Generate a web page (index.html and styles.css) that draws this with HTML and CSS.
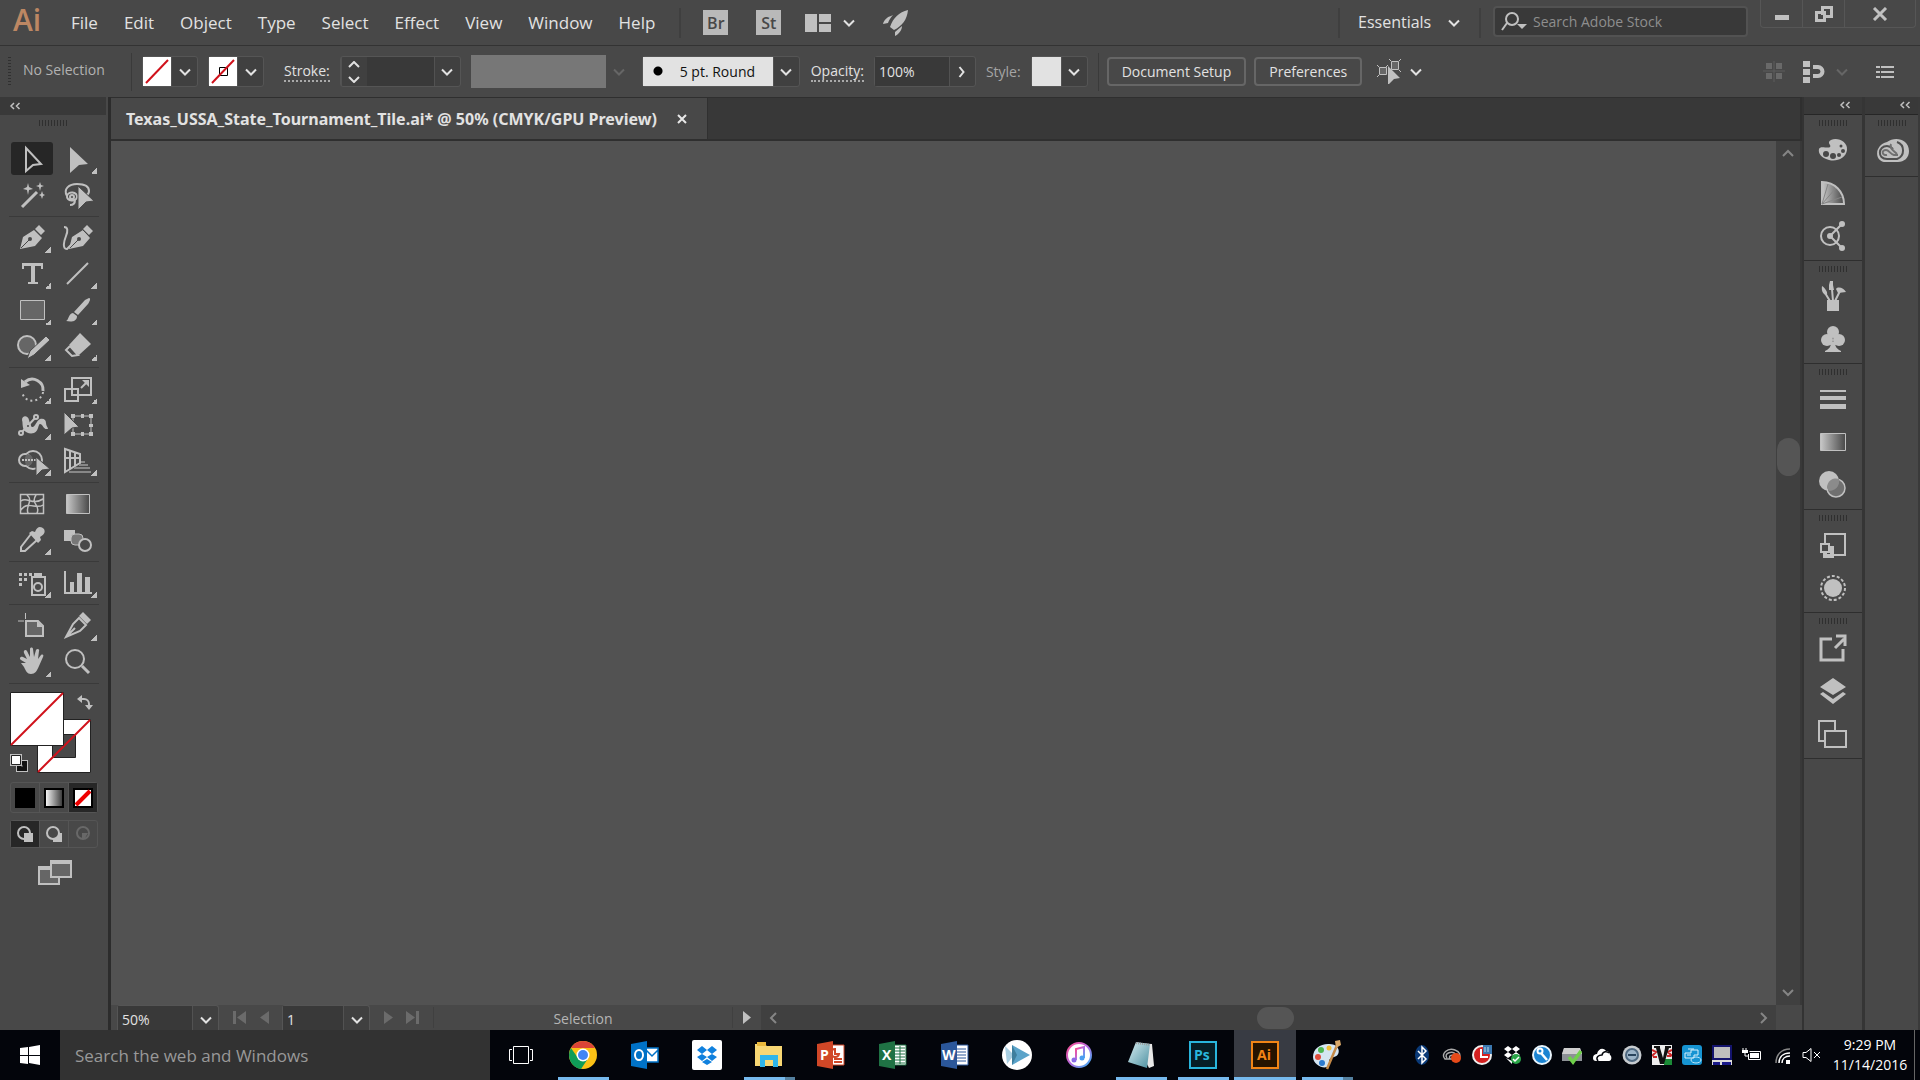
FILE: index.html
```html
<!DOCTYPE html>
<html lang="en">
<head>
  <meta charset="UTF-8" />
  <meta name="viewport" content="width=device-width, initial-scale=1.0"/>
  <title>Texas_USSA_State_Tournament_Tile.ai - Adobe Illustrator</title>
  <link rel="stylesheet" href="styles.css">
</head>
<body>
  <!-- shared shapes -->
  <svg class="defs" aria-hidden="true">
    <symbol id="down" viewBox="0 0 12 8"><path d="M1 1.5l5 5 5-5" stroke="currentColor" stroke-width="2"/></symbol>
    <symbol id="collapse" viewBox="0 0 12 8"><path d="M5 1L2 4l3 3M10.500 1l-3 3 3 3" stroke="currentColor" stroke-width="1.500"/></symbol>
    <linearGradient id="grad"><stop offset="0" stop-color="#c8c8c8"/><stop offset="1" stop-color="#484848"/></linearGradient>
    <linearGradient id="gradbw"><stop offset="0" stop-color="#fff"/><stop offset="1" stop-color="#333"/></linearGradient>
    <linearGradient id="itunes" x2="1" y2="1"><stop offset="0" stop-color="#fb4b8b"/><stop offset=".5" stop-color="#b66be0"/><stop offset="1" stop-color="#35b5f5"/></linearGradient>
    <linearGradient id="glass" x2="1" y2="1"><stop offset="0" stop-color="#d8eef2"/><stop offset="1" stop-color="#4b8fa0"/></linearGradient>
  </svg>

  <div class="app">
    <header class="menubar">
      <span class="logo">Ai</span>
      <nav class="menu">
        <a href="#">File</a>
        <a href="#">Edit</a>
        <a href="#">Object</a>
        <a href="#">Type</a>
        <a href="#">Select</a>
        <a href="#">Effect</a>
        <a href="#">View</a>
        <a href="#">Window</a>
        <a href="#">Help</a>
      </nav>
      <div class="shortcuts">
        <button class="badge">Br</button>
        <button class="badge">St</button>
        <button class="arrange" aria-label="Arrange documents">
          <svg width="26" height="18"><path class="f" d="M0 0h12v18H0zM14 0h12v8H14zM14 10h12v8H14z"/></svg>
          <svg width="12" height="8"><use href="#down"/></svg>
        </button>
        <button aria-label="GPU performance">
          <svg width="26" height="26"><path class="f" d="M25 0C16 2 10 8 7 17l4 3C19 16 24 10 25 0zM8 6C4 7 1 10 0 14l5-1c1-3 3-6 5-8zM12 22l7-6c0 4-3 8-7 10z"/></svg>
        </button>
      </div>
      <div class="workspace">
        <select aria-label="Workspace"><option>Essentials</option></select>
        <svg width="12" height="8"><use href="#down"/></svg>
      </div>
      <label class="stock">
        <svg width="26" height="22"><circle class="s2" cx="11" cy="8" r="6"/><path class="s2" d="M6 12l-5 7"/><path class="f" d="M16 13h10l-5 5z"/></svg>
        <input type="text" placeholder="Search Adobe Stock" aria-label="Search Adobe Stock">
      </label>
      <div class="winbuttons">
        <button aria-label="Minimize"><svg width="16" height="16"><path class="f" d="M1 9h14v5H1z"/></svg></button>
        <button aria-label="Restore"><svg width="18" height="16"><path class="s3" d="M7.500 9V1.500h9v9H10M1.500 6.500h8v8h-8z"/></svg></button>
        <button class="close" aria-label="Close"><svg width="16" height="14"><path class="s3" d="M2 1l12 12M14 1L2 13"/></svg></button>
      </div>
    </header>

    <section class="control">
      <span class="vgrip"></span>
      <span class="state">No Selection</span>
      <div class="combo">
        <button class="sw" aria-label="Fill"><svg width="28" height="29"><path d="M0 0h28v29H0z" fill="#fff"/><path class="red" d="M3 26L25 3"/></svg></button>
        <button class="drop" aria-label="Fill options"><svg width="12" height="8"><use href="#down"/></svg></button>
      </div>
      <div class="combo">
        <button class="sw" aria-label="Stroke color"><svg width="28" height="29"><path d="M0 0h28v29H0z" fill="#fff"/><path d="M10.500 10.500h8v8h-8z" stroke="#000"/><path class="red" d="M3 26L25 3"/></svg></button>
        <button class="drop" aria-label="Stroke options"><svg width="12" height="8"><use href="#down"/></svg></button>
      </div>
      <label class="under strokelabel" for="weight">Stroke:</label>
      <div class="combo weight">
        <button class="spin" aria-label="Step weight"><svg width="12" height="22"><path d="M1 6l5-5 5 5M1 16l5 5 5-5" stroke="currentColor" stroke-width="2"/></svg></button>
        <input type="text" id="weight">
        <button class="drop" aria-label="Weights"><svg width="12" height="8"><use href="#down"/></svg></button>
      </div>
      <div class="profile">
        <span></span>
        <button class="drop" disabled aria-label="Width profile"><svg width="12" height="8"><use href="#down"/></svg></button>
      </div>
      <div class="combo brush">
        <select aria-label="Brush definition"><option>5 pt. Round</option></select>
        <span class="drop"><svg width="12" height="8"><use href="#down"/></svg></span>
      </div>
      <label class="under" for="opacity">Opacity:</label>
      <div class="combo opacity">
        <input type="text" id="opacity" value="100%">
        <button class="drop" aria-label="Opacity slider"><svg width="8" height="12"><path d="M1.500 1l4 5-4 5" stroke="currentColor" stroke-width="2"/></svg></button>
      </div>
      <span class="dim">Style:</span>
      <div class="combo">
        <button class="sw" aria-label="Style"><svg width="29" height="29"><path d="M0 0h29v29H0z" fill="#e2e2e2"/></svg></button>
        <button class="drop" aria-label="Graphic styles"><svg width="12" height="8"><use href="#down"/></svg></button>
      </div>
      <div class="actions">
        <button class="push">Document Setup</button>
        <button class="push">Preferences</button>
        <button class="similar" aria-label="Select similar">
          <svg width="25" height="25"><path d="M2.500 8.500h7v7h-7zM14.500 2.500h7v8h-7z" fill="#666" stroke="#c0c0c0"/><path class="s" d="M0 6l2 2M11 6L9 8M0 18l2-2M12 0l2 2M24 0l-2 2M24 13l-2-2"/><path class="f" d="M11 7l12 12-6 1-6 6z"/></svg>
          <svg width="12" height="8"><use href="#down"/></svg>
        </button>
      </div>
      <div class="aligners">
        <button disabled aria-label="Align"><svg width="22" height="21"><path d="M3 2h6v6H3zM13 2h6v6h-6zM3 12h6v6H3zM13 12h6v6h-6z" fill="#696969"/><path d="M11 0v21M0 10h22" stroke="#5c5c5c"/></svg></button>
        <button class="snap" aria-label="Snap">
          <svg width="22" height="22"><path class="f" d="M0 0h7v6H0zM0 8h7v6H0zM0 16h7v6H0zM10 4h3v4h-3zM10 13h3v4h-3z"/><path d="M13 6h2a4 4 0 010 9h-2" stroke="#c0c0c0" stroke-width="4"/></svg>
          <svg class="off" width="12" height="8"><use href="#down"/></svg>
        </button>
        <button aria-label="Panel menu"><svg width="18" height="14"><path class="s2" d="M0 2h4M5 2h13M0 7h4M5 7h13M0 12h4M5 12h13"/></svg></button>
      </div>
    </section>

    <main class="work">
      <aside class="tools">
        <div class="collapse"><svg width="12" height="8"><use href="#collapse"/></svg></div>
        <div class="hgrip"></div>
        <div class="toolset">
          <button class="tool on" aria-label="Selection"><svg viewBox="-23 -18 46 36"><path class="s2" d="M-6-11L9 5 1 6l-7 6z"/></svg></button>
          <button class="tool more" aria-label="Direct Selection"><svg viewBox="-23 -18 46 36"><path class="f" d="M-8-12L10 5 1 6l-9 8z"/></svg></button>
          <button class="tool" aria-label="Magic Wand"><svg viewBox="-23 -18 46 36"><path class="s3" d="M-10 12L5-3"/><path class="f" d="M-4-12l1 4 4 2-4 1-1 5-1-5-4-1 4-2zM8-13l1 3 3 1-3 1-1 4-1-4-3-1 3-1zM10-4l1 3 2 1-2 1-1 3-1-3-2-1 2-1z"/></svg></button>
          <button class="tool" aria-label="Lasso"><svg viewBox="-23 -18 46 36"><path class="s2" d="M-11 1c-4-7 2-12 10-12S11-8 11-4 9 0 7 1M-11 1a5 4 0 1010 1 5 4 0 00-10-1M-8 2a2 2 0 104 0 2 2 0 00-4 0M-3 5c0 3-2 5-5 5"/><path class="f cut" d="M0-9l16 15-8 1-8 8z"/></svg></button>
        </div>
        <div class="toolset">
          <button class="tool more" aria-label="Pen"><svg viewBox="-23 -18 46 36"><path class="f" d="M-12 11l3-12L2-8l8 8-7 8zM3-9l4-4 6 6-4 4z"/><path class="k" d="M-11 10l8-8M2-9l9 9"/><circle cx="-2" cy="1" r="2" fill="#484848"/></svg></button>
          <button class="tool" aria-label="Curvature"><svg viewBox="-23 -18 46 36"><path class="f" d="M-9 11l3-12L5-8l7 8-7 8zM5-9l4-4 6 6-4 4z"/><path class="k" d="M-8 10l8-8M4-9l9 9"/><circle cx="1" cy="1" r="2" fill="#484848"/><path class="s2" d="M-14-11c4 0 4 4 2 9s-4 13 1 13l5-5"/></svg></button>
          <button class="tool more" aria-label="Type"><svg viewBox="-23 -18 46 36"><path class="f" d="M-10-11h21v6H9v-3H3V8h3v2H-4V8h3V-8h-7v3h-2z"/></svg></button>
          <button class="tool more" aria-label="Line Segment"><svg viewBox="-23 -18 46 36"><path class="s2" d="M-11 10L10-11"/></svg></button>
          <button class="tool more" aria-label="Rectangle"><svg viewBox="-23 -18 46 36"><path d="M-11.500-9.500h24v19h-24z" fill="#666" stroke="#c0c0c0"/></svg></button>
          <button class="tool more" aria-label="Paintbrush"><svg viewBox="-23 -18 46 36"><path class="f" d="M11-12c2 0 1 3-1 6L0 5l-4-3L7-10zM-5 3l4 3c0 6-6 6-11 5 3-1 2-7 7-8z"/></svg></button>
          <button class="tool more" aria-label="Shaper"><svg viewBox="-23 -18 46 36"><circle cx="-5" cy="-1" r="9" fill="#666" stroke="#c0c0c0" stroke-width="2"/><path class="f cut" d="M14-10l4 4L2 9l-7 4 3-8z"/></svg></button>
          <button class="tool more" aria-label="Eraser"><svg viewBox="-23 -18 46 36"><path class="f" d="M2-13L13-2 1 9l-10-10z"/><path class="s2" d="M-8 0l-4 4 6 6 6-1-8-9"/></svg></button>
        </div>
        <div class="toolset">
          <button class="tool more" aria-label="Rotate"><svg viewBox="-23 -18 46 36"><path d="M-7-7c8-7 19 0 18 9" stroke="#c0c0c0" stroke-width="3"/><path class="f" d="M-11-10v9l9-3z"/><path d="M11 3c-1 10-18 13-21 0" class="s2" stroke-dasharray="2 3"/></svg></button>
          <button class="tool more" aria-label="Scale"><svg viewBox="-23 -18 46 36"><path class="s2" d="M-6-11h19V6H-6zM-13 0H0v12h-13z"/><path class="s2" d="M3-1l6-6"/><path class="f" d="M4-9h7v7z"/></svg></button>
          <button class="tool more" aria-label="Width"><svg viewBox="-23 -18 46 36"><path class="f" d="M-10-5c0-5 6-5 7 0 1 3 1 6 3 7 3 1 4-6 8-8 4-1 6 1 6 4 0 3 2 4 2 6-5 1-5-5-8-5-2 0-1 7-6 9-4 1-8 0-10-3-2-4-1-7-2-10z"/><path class="s2" d="M-11 8L4-8"/><circle class="s2 hole" cx="-11" cy="8" r="2"/><circle class="s2 hole" cx="4" cy="-8" r="2"/><circle class="s2 hole" cx="-4" cy="1" r="2"/></svg></button>
          <button class="tool" aria-label="Free Transform"><svg viewBox="-23 -18 46 36"><path class="s" d="M-5-9h18V9H-5z"/><path class="f" d="M-7-11h4v4h-4zM3-11h3v4H3zM11-11h4v4h-4zM11-1h4v3h-4zM11 7h4v4h-4zM3 7h3v4H3zM-7 7h4v4h-4z"/><path class="f cut" d="M-14-13L1 2l-7 1-8 7z"/></svg></button>
          <button class="tool more" aria-label="Shape Builder"><svg viewBox="-23 -18 46 36"><circle class="s2" cx="1" cy="-1" r="9"/><circle class="s2 hole" cx="-7" cy="-1" r="6"/><path d="M-5-7a9 9 0 000 12 6 6 0 000-12z" fill="#666"/><path class="s2" d="M-10-1H8" stroke-dasharray="2 1"/><path class="f cut" d="M4-4l14 12-8 1-6 6z"/></svg></button>
          <button class="tool more" aria-label="Perspective Grid"><svg viewBox="-23 -18 46 36"><path class="s2" d="M-13-12v23L2 2V-7zM-8-10V8M-3-8V5M-13-3H2"/><path d="M3 1h4M1 4h9M-4 7h16M-9 11h22" stroke="#888" stroke-width="2"/></svg></button>
        </div>
        <div class="toolset">
          <button class="tool" aria-label="Mesh"><svg viewBox="-23 -18 46 36"><path class="s" stroke-width="1.500" d="M-11.500-9.500h23v19h-23zM-11-3C-5-8 0 2 11-5M-11 6C-4-4 4 6 11 1M-5-9c7 6-2 11 1 18M4-9C-2 0 9 1 5 9"/></svg></button>
          <button class="tool" aria-label="Gradient"><svg viewBox="-23 -18 46 36"><path d="M-11.500-9.500h23v19h-23z" fill="url(#grad)" stroke="#c0c0c0"/></svg></button>
          <button class="tool more" aria-label="Eyedropper"><svg viewBox="-23 -18 46 36"><path class="s2" d="M-1-6L-11 7v4h4L5 0"/><path class="f" d="M-3-7l3-2 3 1C5-14 9-14 12-11c2 4-1 6-4 8l1 3-3 3z"/></svg></button>
          <button class="tool" aria-label="Blend"><svg viewBox="-23 -18 46 36"><path class="f" d="M-14-10h11v11h-11z"/><rect x="-7" y="-6" width="12" height="11" rx="4" fill="#777" stroke="#c0c0c0"/><circle class="s2 hole" cx="7" cy="5" r="6"/></svg></button>
        </div>
        <div class="toolset">
          <button class="tool more" aria-label="Symbol Sprayer"><svg viewBox="-23 -18 46 36"><path class="f" d="M-13-10h3v3h-3zM-8-10h3v3h-3zM-3-10h3v3h-3zM-13-5h3v3h-3zM-8-5h3v3h-3zM-13 0h3v3h-3zM2-10h8v5H2z"/><path class="s2" d="M0-6h13v18H0z"/><circle class="s2" cx="6" cy="4" r="4"/></svg></button>
          <button class="tool more" aria-label="Column Graph"><svg viewBox="-23 -18 46 36"><path class="f" d="M-14-12h2v21h26v2h-28zM-8-1h4v10h-4zM-1-10h5V9h-5zM7-6h5V9H7z"/></svg></button>
        </div>
        <div class="toolset">
          <button class="tool" aria-label="Artboard"><svg viewBox="-23 -18 46 36"><path d="M-6-5H6l5 5v10H-6z" fill="#666" stroke="#c0c0c0" stroke-width="2"/><path class="f" d="M5-5l6 6H5z"/><path class="s" d="M-14-5h6M-6.500-13v6"/></svg></button>
          <button class="tool more" aria-label="Slice"><svg viewBox="-23 -18 46 36"><path class="s2" d="M-12 11L-5-2l6-6 7 7-6 6zM-12 11l9-9"/><path class="f" d="M5-14l8 8-4 4-8-8z"/></svg></button>
          <button class="tool more" aria-label="Hand"><svg viewBox="-23 -18 46 36"><path class="f" d="M-6 1L-11-2c-2-1-1-4 2-3l4 2-3-6c-1-3 2-4 3-2l3 6 0-8c0-2 3-2 3 0l1 8 2-7c1-2 4-1 3 1L6-3l3-4c2-1 3 0 2 2L7 4C5 9 3 12-1 12S-6 9-8 5l-3-4z"/></svg></button>
          <button class="tool" aria-label="Zoom"><svg viewBox="-23 -18 46 36"><circle class="s2" cx="-3" cy="-3" r="9"/><path class="s3" d="M4 4l7 7"/></svg></button>
        </div>
        <div class="paint">
          <button class="strokebox" aria-label="Stroke"><svg width="54" height="54"><path d="M.5.5h53v53H.5z" fill="#fff" stroke="#222"/><path d="M15.500 15.500h23v23h-23z" fill="#484848" stroke="#222"/><path class="red" d="M1 53L53 1"/></svg></button>
          <button class="fillbox" aria-label="Fill"><svg width="54" height="54"><path d="M.5.5h53v53H.5z" fill="#fff" stroke="#222"/><path class="red" d="M1 53L53 1"/></svg></button>
          <button class="swap" aria-label="Swap fill and stroke"><svg width="16" height="16"><path class="s2" d="M4 4h3a5 5 0 015 5v2"/><path class="f" d="M0 4l5-4v8zM8 10h8l-4 5z"/></svg></button>
          <button class="initial" aria-label="Default fill and stroke"><svg width="18" height="18"><path d="M6 6h12v12H6z" fill="#c0c0c0"/><path d="M9 9h6v6H9z" fill="#484848" stroke="#111" stroke-width="4"/><path d="M0 0h12v12H0z" fill="#c0c0c0"/><path d="M1.500 1.500h9v9h-9z" fill="#fff" stroke="#222"/></svg></button>
        </div>
        <div class="modes colors">
          <button aria-label="Color"><svg width="20" height="20"><path d="M0 0h20v20H0z" fill="#000"/></svg></button>
          <button aria-label="Gradient"><svg width="20" height="20"><path d="M1 1h18v18H1z" fill="url(#gradbw)" stroke="#000" stroke-width="2"/></svg></button>
          <button class="on" aria-label="None"><svg width="20" height="20"><path d="M1 1h18v18H1z" fill="#fff" stroke="#000" stroke-width="2"/><path d="M3 17L17 3" stroke="#e00" stroke-width="4"/></svg></button>
        </div>
        <div class="modes">
          <button class="on" aria-label="Draw Normal"><svg width="18" height="18"><circle class="s2" cx="8" cy="8" r="6"/><path class="f" d="M8 8h9v9H8z"/></svg></button>
          <button aria-label="Draw Behind"><svg width="18" height="18"><path class="f" d="M8 8h9v9H8z"/><circle class="s2 hole" cx="8" cy="8" r="6"/></svg></button>
          <button disabled aria-label="Draw Inside"><svg width="18" height="18"><circle cx="9" cy="8" r="6" stroke="#686868" stroke-width="2"/><path d="M8 8h6l-3 5H8z" fill="#686868"/></svg></button>
        </div>
        <button class="screen" aria-label="Change screen mode"><svg width="34" height="26"><path d="M1 8h20v16H1z" fill="#666" stroke="#c0c0c0" stroke-width="2"/><path d="M13 2h20v15H13z" fill="#666" stroke="#c0c0c0" stroke-width="2"/><path class="f" d="M0 6h13v4H0zM12 0h22v4H12z"/></svg></button>
      </aside>

      <section class="document">
        <div class="tabs">
          <div class="tab">
            <span>Texas_USSA_State_Tournament_Tile.ai* @ 50% (CMYK/GPU Preview)</span>
            <button aria-label="Close tab"><svg width="10" height="10"><path d="M1 1l8 8M9 1L1 9" stroke="#e8e8e8" stroke-width="2"/></svg></button>
          </div>
        </div>
        <div class="view">
          <div class="canvas"></div>
          <div class="vscroll">
            <svg width="12" height="8"><path d="M1 7l5-5 5 5" stroke="#858585" stroke-width="2"/></svg>
            <span class="thumb"></span>
            <svg width="12" height="8"><path d="M1 1l5 5 5-5" stroke="#858585" stroke-width="2"/></svg>
          </div>
        </div>
        <footer class="status">
          <div class="combo zoom">
            <input type="text" value="50%" aria-label="Zoom">
            <button class="drop" aria-label="Zoom levels"><svg width="12" height="8"><use href="#down"/></svg></button>
          </div>
          <div class="step">
            <button aria-label="First artboard"><svg width="14" height="13"><path d="M0 0h3v13H0zM13 0v13L4 6.500z" fill="#6b6b6b"/></svg></button>
            <button aria-label="Previous artboard"><svg width="9" height="13"><path d="M9 0v13L0 6.500z" fill="#6b6b6b"/></svg></button>
          </div>
          <div class="combo board">
            <input type="text" value="1" aria-label="Artboard">
            <button class="drop" aria-label="Artboards"><svg width="12" height="8"><use href="#down"/></svg></button>
          </div>
          <div class="step">
            <button aria-label="Next artboard"><svg width="9" height="13"><path d="M0 0v13l9-6.500z" fill="#6b6b6b"/></svg></button>
            <button aria-label="Last artboard"><svg width="14" height="13"><path d="M10 0h3v13h-3zM0 0v13l9-6.500z" fill="#6b6b6b"/></svg></button>
          </div>
          <span class="current">Selection</span>
          <button class="play" aria-label="Status menu"><svg width="8" height="13"><path class="f" d="M0 0v13l8-6.500z"/></svg></button>
          <div class="hscroll">
            <svg width="8" height="12"><path d="M7 1L2 6l5 5" stroke="#858585" stroke-width="2"/></svg>
            <span class="thumb"></span>
            <svg width="8" height="12"><path d="M1 1l5 5-5 5" stroke="#858585" stroke-width="2"/></svg>
          </div>
          <span class="corner"></span>
        </footer>
      </section>

      <aside class="dock main">
        <div class="collapse"><svg width="12" height="8"><use href="#collapse"/></svg></div>
        <div class="group">
          <button aria-label="Color"><svg width="30" height="30"><path class="f" d="M13 5C20 2 30 7 29 15S19 27 11 25 0 18 1 14s9 0 11-2-4-4 1-7z"/><g fill="#484848"><circle cx="8" cy="19" r="3"/><circle cx="15" cy="21" r="3"/><circle cx="21" cy="20" r="2"/><circle cx="25" cy="16" r="2"/><circle cx="23" cy="11" r="1.500"/></g></svg></button>
          <button aria-label="Color Guide"><svg width="30" height="30"><path d="M4 4c13 0 22 10 22 22H4z" fill="url(#grad)" stroke="#c0c0c0" stroke-width="2"/><path d="M4 26l6-20M4 26L18 10M4 26l20-7" stroke="#858585"/></svg></button>
          <button aria-label="Color Themes"><svg width="30" height="30"><circle class="s2" cx="12" cy="15" r="9"/><path class="s2" d="M24 3L12 15l12 12"/><circle class="f" cx="12" cy="15" r="3"/><circle class="f" cx="24" cy="3" r="3"/><circle class="f" cx="24" cy="27" r="3"/></svg></button>
        </div>
        <div class="group">
          <button aria-label="Brushes"><svg width="30" height="30"><path class="f" d="M9 19h12v11H9zM4 5c3 2 6 6 5 9-3 0-6-3-5-9zM11 4l1-4h3v4l1 5h-5zM18 8c2-3 8-1 10 3l-8 1z"/><path class="s2" d="M7 12l5 8M14 8l1 12M22 10l-5 10"/></svg></button>
          <button aria-label="Symbols"><svg width="30" height="30"><path class="f" d="M13 18h4c0 5 2 7 6 9v1H7v-1c4-2 6-4 6-9z"/><circle class="f" cx="15" cy="8" r="6"/><circle class="f" cx="9" cy="16" r="6"/><circle class="f" cx="21" cy="16" r="6"/></svg></button>
        </div>
        <div class="group">
          <button aria-label="Stroke"><svg width="30" height="30"><path class="f" d="M2 6h26v2H2zM2 12h26v4H2zM2 20h26v5H2z"/></svg></button>
          <button aria-label="Gradient"><svg width="30" height="30"><path d="M2.500 6.500h25v17h-25z" fill="url(#grad)" stroke="#c0c0c0"/></svg></button>
          <button aria-label="Transparency"><svg width="30" height="30"><circle class="f" cx="11" cy="11" r="10"/><circle cx="18" cy="18" r="9" fill="#707070" stroke="#c0c0c0" stroke-width="1.500"/><path d="M9 18a9 9 0 0112-9 10 10 0 01-10 12z" fill="#8b8b8b"/></svg></button>
        </div>
        <div class="group">
          <button aria-label="Appearance"><svg width="30" height="30"><path class="s2" d="M7 14V4h20v21H16"/><path d="M7 18h7v8H7z" stroke="#c0c0c0" stroke-width="4"/><path class="s2 hole" d="M3 14h8v8H3z"/></svg></button>
          <button aria-label="Graphic Styles"><svg width="30" height="30"><circle class="f" cx="15" cy="15" r="9"/><circle class="s2" cx="15" cy="15" r="12" stroke-dasharray="3 2"/></svg></button>
        </div>
        <div class="group">
          <button aria-label="Asset Export"><svg width="30" height="30"><path class="s3" d="M14 6H3v21h22V16M17 15l9-9M18 3h9v10"/></svg></button>
          <button aria-label="Layers"><svg width="30" height="30"><path class="f" d="M15 2l13 9-13 8L2 11zM2 18l3-2 10 7 10-7 3 2-13 10z"/></svg></button>
          <button aria-label="Artboards"><svg width="30" height="30"><path class="s2" d="M7 22H1V2h16v10M7 12h21v16H7z"/></svg></button>
        </div>
      </aside>
      <aside class="dock side">
        <div class="collapse"><svg width="12" height="8"><use href="#collapse"/></svg></div>
        <div class="group">
          <button aria-label="Libraries"><svg width="34" height="26"><path class="f" d="M11 4C19-2 33 1 33 13c0 7-5 11-11 11H10C-2 24-2 7 11 4z"/><path d="M21 4a9 9 0 010 17H11C1 21 2 8 11 8c3 0 5 2 6 3" stroke="#505050" stroke-width="2"/><path d="M22 17h-4c-4-1-5-5-8-5-5 0-4 6 1 5M15 6c-2 4 3 7 6 10" stroke="#707070" stroke-width="2"/></svg></button>
        </div>
      </aside>
    </main>
  </div>

  <footer class="taskbar">
    <button class="start" aria-label="Start"><svg width="20" height="20"><path d="M0 3l8-1v8H0zM9 2l11-2v10H9zM0 11h8v8l-8-1zM9 11h11v9L9 18z" fill="#fff"/></svg></button>
    <input class="find" type="text" placeholder="Search the web and Windows" aria-label="Search the web and Windows">
    <nav class="pinned">
      <button aria-label="Task View"><svg width="24" height="20"><path d="M4.500 1.500h15v17h-15zM3 4.500H.5v11H3M21 4.500h2.500v11H21" stroke="#fff"/></svg></button>
      <button class="run" aria-label="Chrome"><svg width="28" height="28"><circle cx="14" cy="14" r="14" fill="#fbc116"/><path d="M2 7a14 14 0 0112-7 14 14 0 0112 7H14z" fill="#db4437"/><path d="M2 7a14 14 0 0010 21l6-9-9-2z" fill="#0f9d58"/><circle cx="14" cy="14" r="6.500" fill="#fff"/><circle cx="14" cy="14" r="5" fill="#4285f4"/></svg></button>
      <button aria-label="Outlook"><svg width="28" height="28"><path d="M14 7h13v14H14z" fill="#fff"/><path d="M15 9l6 6 6-6M14 7h13v14H14" stroke="#0072c6" stroke-width="1.500"/><path d="M0 3l16-3v28L0 25z" fill="#0072c6"/><ellipse cx="8" cy="14" rx="4" ry="5" stroke="#fff" stroke-width="2"/></svg></button>
      <button aria-label="Dropbox"><svg width="30" height="30"><rect width="30" height="30" rx="2" fill="#fff"/><path d="M10 6l5 4-5 4-5-4zM20 6l5 4-5 4-5-4zM10 14l5 3-5 4-5-4zM20 14l5 3-5 4-5-4zM15 19l5 3-5 3-5-3z" fill="#1081de"/></svg></button>
      <button class="run many" aria-label="File Explorer"><svg width="28" height="26"><path d="M0 2h9l3 2h15v20H0z" fill="#f7d774"/><path d="M2 0h9v4H2z" fill="#e9b83c"/><path d="M5 25V13h18v12h-5v-7h-8v7z" fill="#2fb5ea"/></svg></button>
      <button aria-label="PowerPoint"><svg width="28" height="28"><path d="M14 4h13v20H14z" fill="#fff" stroke="#d04727"/><path d="M17 18h8M17 21h8M18 8a4 4 0 104 5h-4z" stroke="#d04727" stroke-width="2"/><path d="M0 3l16-3v28L0 25z" fill="#d04727"/><text x="3" y="19" class="glyph">P</text></svg></button>
      <button aria-label="Excel"><svg width="28" height="28"><path d="M14 4h13v20H14z" fill="#fff" stroke="#1f7244"/><path d="M16 7h10M16 10h10M16 13h10M16 16h10M16 19h10M16 22h10M21 5v18" stroke="#1f7244"/><path d="M0 3l16-3v28L0 25z" fill="#1f7244"/><text x="3" y="19" class="glyph">X</text></svg></button>
      <button aria-label="Word"><svg width="28" height="28"><path d="M14 4h13v20H14z" fill="#fff" stroke="#2b579a"/><path d="M15 8h10M15 11h10M15 14h10M15 17h10M15 20h10" stroke="#2b579a"/><path d="M0 3l16-3v28L0 25z" fill="#2b579a"/><text x="1" y="19" class="glyph">W</text></svg></button>
      <button aria-label="Player"><svg width="30" height="30"><circle cx="15" cy="15" r="15" fill="#fff"/><path d="M10 5l18 10-18 10z" fill="#5ba3c9"/><path d="M3 6l9 9-7 9z" fill="#a9cfe2"/><path d="M10 5l5 10-5 10z" fill="#3e7f9e"/></svg></button>
      <button aria-label="iTunes"><svg width="28" height="28"><circle cx="14" cy="14" r="12" fill="#fff" stroke="url(#itunes)" stroke-width="2"/><path d="M11 19V8l8-2v11" stroke="url(#itunes)" stroke-width="2"/><circle cx="9" cy="19" r="2.500" fill="#8a6be8"/><circle cx="17" cy="17" r="2.500" fill="#4b9df0"/></svg></button>
      <button class="run" aria-label="Notepad"><svg width="28" height="28"><path d="M9 2l16 1 2 22-5 2z" fill="#e8e8e8"/><path d="M9 1l14 2-3 24L1 21z" fill="url(#glass)"/><path d="M9 2l14 2" stroke="#999" stroke-width="2" stroke-dasharray="1 1"/></svg></button>
      <button class="run" aria-label="Photoshop"><svg width="28" height="28"><path d="M1 1h26v26H1z" fill="#061e26" stroke="#29b5dc" stroke-width="2"/><text x="5" y="19" class="glyph ps">Ps</text></svg></button>
      <button class="run active" aria-label="Illustrator"><svg width="28" height="28"><path d="M1 1h26v26H1z" fill="#261300" stroke="#f28416" stroke-width="2"/><text x="6" y="19" class="glyph ai">Ai</text></svg></button>
      <button class="run many" aria-label="Paint"><svg width="30" height="30"><path d="M16 4C28 3 30 15 22 17s-3 5-6 9S1 25 1 17 8 4 16 4z" fill="#d5e6f3"/><circle cx="9" cy="10" r="3" fill="#4eb653"/><circle cx="17" cy="8" r="2.500" fill="#f0bd35"/><circle cx="6" cy="17" r="3" fill="#df4b3a"/><circle cx="10" cy="23" r="3" fill="#2c7bd0"/><path d="M26 3L15 29" stroke="#c58a48" stroke-width="2.500"/><path d="M23 1l5-1 1 5-5 3z" fill="#d9a868"/></svg></button>
    </nav>
    <div class="tray">
      <svg width="20" height="20"><ellipse cx="10" cy="10" rx="7" ry="10" fill="#0a3a78"/><path d="M6 6l8 8-4 4V2l4 4-8 8" stroke="#fff" stroke-width="1.500"/></svg>
      <svg width="20" height="20"><path d="M3 14c-5-5 3-12 10-9 5 2 6 5 4 9zM5 13c-4-5 6-8 9-3M8 14c-2-4 3-5 5-2" stroke="#aaa" stroke-width="1.500"/><circle cx="14" cy="13" r="5" fill="#e64a19"/></svg>
      <svg width="20" height="20"><circle cx="10" cy="10" r="9" fill="#d32020" stroke="#eee" stroke-width="2"/><path d="M9 4v8h7" stroke="#fff" stroke-width="2"/><path d="M11 0h9v9h-9z" fill="#3b78b0"/><path d="M13 2v5M16 2v5" stroke="#bde"/></svg>
      <svg width="20" height="20"><path d="M6 1l4 3-4 3-4-3zM14 1l4 3-4 3-4-3zM6 7l4 3-4 3-4-3zM14 7l4 3-4 3-4-3zM4 13l6 3v3z" fill="#fff"/><circle cx="14" cy="14" r="5" fill="#2aa548"/><path d="M11 14l2 2 4-4" stroke="#fff" stroke-width="1.500"/></svg>
      <svg width="20" height="20"><circle cx="10" cy="10" r="9" fill="#1b84d2" stroke="#e9f4fb" stroke-width="2"/><path d="M9 8l6 7" stroke="#fff" stroke-width="2.500"/><circle cx="8" cy="6" r="2.500" stroke="#fff" stroke-width="2"/></svg>
      <svg width="20" height="20"><path d="M2 3h16l2 6v7H0V9z" fill="#8d9196"/><path d="M2 3h16l2 6H0z" fill="#cfcfcf"/><path d="M7 12l4 5 8-11" stroke="#6fd04b" stroke-width="3.500"/></svg>
      <svg width="20" height="20"><path d="M1 13c0-3 2-4 4-4 1-5 6-7 9-3 3 0 4 3 4 4 2 1 2 6-1 6H4c-2 0-3-1-3-3z" fill="#fff"/><path d="M6 16c-3-4 1-6 4-6 1-4 5-4 7-2" stroke="#05070d" stroke-width="1.500"/></svg>
      <svg width="20" height="20"><circle cx="10" cy="10" r="9.500" fill="#c6cbcf"/><circle cx="10" cy="10" r="6" fill="#9db4c8" stroke="#4e6880" stroke-width="2"/><path d="M6 10h8" stroke="#29435c" stroke-width="2"/></svg>
      <svg width="20" height="20"><path d="M0 0h20v20H0z" fill="#eee"/><path d="M0 5l4 2-4 4M20 5l-4 2 4 4M1 12h4M15 11h4" stroke="#cc2525" stroke-width="2"/><path d="M12 14h8v6h-8z" fill="#1b8b37"/><path d="M2 1h6v2L11 13l2-10V1h6v2h-2l-5 16H8L4 3H2z" fill="#111"/></svg>
      <svg width="20" height="20"><rect width="20" height="20" rx="3" fill="#1694d2"/><path d="M3 8h6V5h7v5h-4v3H3zM6 4h6M5 10h4" stroke="#d8f1fc"/><ellipse cx="14" cy="15" rx="5" ry="3" stroke="#bfe8fb"/></svg>
      <svg width="20" height="20"><path d="M0 0h20v20H0z" fill="#ddd"/><path d="M1 1h18v13H1z" fill="#bebebe" stroke="#14146e" stroke-width="2"/><path d="M1 17h7v3H1zM10 17h9v3h-9z" fill="#1a1a8a"/></svg>
      <svg width="20" height="20"><path d="M7.500 6.500h11v8h-12V9" stroke="#fff"/><path d="M8 8h9v5H8z" fill="#fff"/><path d="M1 3v3M4 3v3M3 8v3h3" stroke="#fff"/><path d="M0 5h6v3H0z" fill="#fff"/></svg>
      <svg width="20" height="20"><path d="M4 18C4 10 9 4 18 4" stroke="#888" stroke-width="1.500"/><path d="M7 18c0-6 4-10 11-10M10 18c0-4 3-7 8-7" stroke="#fff" stroke-width="1.500"/><path d="M14 15h4v4h-4z" fill="#fff"/></svg>
      <svg width="20" height="20"><path d="M1 7.500h3l5-4v13l-5-4H1zM12 7l6 6M18 7l-6 6" stroke="#fff"/></svg>
    </div>
    <div class="clock"><span>9:29 PM</span><span>11/14/2016</span></div>
    <span class="desktop"></span>
  </footer>
</body>
</html>
```
FILE: styles.css
```css
* {
  box-sizing: border-box;
}
html,
body {
  height: 100%;
}
body {
  margin: 0;
  display: flex;
  flex-direction: column;
  overflow: hidden;
  background: #484848;
  color: #e2e2e2;
  font-family: "Open Sans", "Noto Sans", sans-serif;
  font-size: 14px;
}
button,
input,
select {
  margin: 0;
  padding: 0;
  border: 0;
  background: none;
  color: inherit;
  font: inherit;
  appearance: none;
  outline: none;
}
button {
  display: flex;
  align-items: center;
  justify-content: center;
}
a {
  color: inherit;
  text-decoration: none;
}
svg {
  display: block;
  flex: none;
  fill: none;
}
.defs {
  position: absolute;
  width: 0;
  height: 0;
}
/* icon strokes and fills */
.f { fill: #c0c0c0; }
.s { stroke: #c0c0c0; }
.s2 { stroke: #c0c0c0; stroke-width: 2; }
.s3 { stroke: #c0c0c0; stroke-width: 3; }
.k { stroke: #484848; stroke-width: 1; }
.cut { stroke: #484848; stroke-width: 1; }
.hole { fill: #484848; }
.red { stroke: #d0111b; stroke-width: 2; }

.app {
  flex: 1;
  min-height: 0;
  display: flex;
  flex-direction: column;
}

/* menu bar */
.menubar {
  display: flex;
  align-items: center;
  height: 46px;
  padding: 0 4px 0 13px;
  border-bottom: 1px solid #333;
}
.logo {
  width: 45px;
  padding-bottom: 5px;
  color: #bd8763;
  font-size: 30px;
  font-weight: 600;
  line-height: 40px;
}
.menu {
  display: flex;
  gap: 26px;
  padding-left: 13px;
  font-size: 17px;
}
.shortcuts {
  display: flex;
  align-items: center;
  gap: 28px;
  height: 30px;
  margin-left: 24px;
  padding-left: 22px;
  border-left: 2px solid #3f3f3f;
}
.badge {
  width: 25px;
  height: 25px;
  background: #b9b9b9;
  color: #484848;
  font-size: 16px;
  font-weight: 600;
}
.arrange {
  gap: 12px;
}
.shortcuts .arrange {
  margin-left: -4px;
}
.workspace {
  display: flex;
  align-items: center;
  gap: 16px;
  height: 30px;
  margin-left: auto;
  padding: 0 19px 0 18px;
  border: solid #3f3f3f;
  border-width: 0 2px;
  font-size: 16px;
}
.workspace select {
  padding-bottom: 2px;
}
.stock {
  display: flex;
  align-items: center;
  gap: 6px;
  width: 255px;
  height: 31px;
  margin: 0 12px 2px;
  padding: 0 6px;
  background: #393939;
  border: 2px solid #525252;
  border-radius: 4px;
}
.stock input {
  flex: 1;
  min-width: 0;
}
.stock input::placeholder {
  color: #8e8e8e;
  opacity: 1;
}
.winbuttons {
  display: flex;
  align-self: flex-start;
  height: 28px;
  border: solid #565656;
  border-width: 0 1px 1px;
  border-radius: 0 0 4px 4px;
}
.winbuttons button {
  width: 42px;
  border-right: 1px solid #565656;
}
.winbuttons .close {
  width: 70px;
  border: 0;
}

/* control bar */
.control {
  display: flex;
  align-items: center;
  gap: 10px;
  height: 51px;
  padding: 0 26px 0 8px;
  white-space: nowrap;
}
.vgrip {
  width: 3px;
  height: 30px;
  background: repeating-linear-gradient(#303030 0 1px, transparent 1px 3px);
}
.state {
  width: 111px;
  padding: 0 0 4px 2px;
  line-height: 34px;
  border-right: 1px solid #3a3a3a;
  color: #b2b2b2;
}
.combo {
  display: flex;
  height: 31px;
  border: 1px solid #555;
  border-radius: 3px;
  background: #404040;
}
.sw {
  background: #fff;
}
.drop,
.spin {
  width: 26px;
  display: flex;
  align-items: center;
  justify-content: center;
  border-left: 1px solid #525252;
}
.combo input {
  min-width: 0;
  padding-left: 4px;
  background: #393939;
}
.under {
  border-bottom: 2px dotted #aaa;
  line-height: 18px;
}
.strokelabel {
  margin-left: 10px;
}
.weight input {
  width: 67px;
}
.profile {
  display: flex;
  height: 33px;
}
.profile span {
  width: 135px;
  background: #777;
}
.profile .drop {
  color: #666;
  border: 0;
}
.brush {
  margin-right: 1px;
}
.brush select {
  width: 130px;
  padding-left: 37px;
  background: radial-gradient(circle at 15px 14px, #000 4px, #e2e2e2 5px);
  color: #111;
}
.opacity input {
  width: 74px;
}
.dim {
  color: #a5a5a5;
}
.actions {
  display: flex;
  align-items: center;
  gap: 8px;
  height: 38px;
  padding-left: 8px;
  border-left: 1px solid #3a3a3a;
}
.push {
  height: 29px;
  padding: 0 13px;
  border: 2px solid #666;
  border-radius: 4px;
}
.snap {
  gap: 11px;
}
.similar {
  gap: 8px;
  padding-left: 7px;
}
.off {
  color: #666;
}
.aligners {
  display: flex;
  gap: 18px;
  margin-left: auto;
}
.aligners > :last-child {
  margin-left: 10px;
}

/* work area */
.work {
  flex: 1;
  min-height: 0;
  display: flex;
}
.collapse {
  height: 18px;
  padding: 5px 9px;
  background: #393939;
  color: #c0c0c0;
}
.hgrip,
.group::before {
  content: "";
  display: block;
  width: 28px;
  height: 6px;
  margin: 5px auto;
  background: repeating-linear-gradient(90deg, #2f2f2f 0 1px, transparent 1px 3px);
}
.tools {
  width: 111px;
  padding-right: 2px;
  border-right: 3px solid #2c2c2c;
}
.toolset {
  display: grid;
  grid-template-columns: 46px 46px;
  margin: 0 7px 3px 9px;
  padding-bottom: 3px;
  border-bottom: 1px solid #3a3a3a;
}
.hgrip + .toolset {
  padding-top: 10px;
}
.tool {
  position: relative;
  height: 36px;
}
.tool svg {
  width: 46px;
  height: 36px;
}
.tool.on {
  height: 33px;
  margin: 1px 2px 2px;
  background: #262626;
  border-radius: 3px;
}
.tool.more::after {
  content: "";
  position: absolute;
  right: 4px;
  bottom: 3px;
  width: 6px;
  height: 6px;
  background: linear-gradient(135deg, transparent 50%, #c0c0c0 50%);
}
.paint {
  position: relative;
  height: 80px;
  margin: 8px 0 10px 10px;
}
.paint button {
  position: absolute;
}
.paint .fillbox { left: 0; top: 0; }
.paint .strokebox { left: 27px; top: 27px; }
.paint .swap { left: 67px; top: 3px; }
.paint .initial { left: 0; top: 62px; }
.modes {
  display: flex;
  width: 88px;
  height: 28px;
  margin: 0 0 7px 10px;
  border: 1px solid #555;
  border-radius: 3px;
}
.modes.colors {
  height: 31px;
}
.modes button {
  flex: 1;
}
.modes button + button {
  border-left: 1px solid #555;
}
.modes .on {
  background: #272727;
}
.screen {
  width: 90px;
  margin: 12px 0 0 10px;
}

/* document window */
.document {
  flex: 1;
  min-width: 0;
  display: flex;
  flex-direction: column;
}
.tabs {
  display: flex;
  height: 44px;
  border: solid #2f2f2f;
  border-width: 1px 2px 2px 0;
  background: #383838;
}
.tab {
  display: flex;
  align-items: center;
  gap: 20px;
  padding: 0 20px 0 15px;
  background: #484848;
  border-right: 1px solid #303030;
  font-family: "Noto Sans", "Open Sans", sans-serif;
  font-size: 16px;
  font-weight: 700;
  white-space: nowrap;
}
.view {
  flex: 1;
  display: flex;
}
.canvas {
  flex: 1;
  background: #525252;
}
.vscroll {
  display: flex;
  flex-direction: column;
  align-items: center;
  width: 26px;
  padding: 8px 0;
  background: #404040;
  border-right: 2px solid #383838;
}
.thumb {
  background: #555;
  border-radius: 12px;
}
.vscroll .thumb {
  width: 23px;
  height: 38px;
  margin-top: 26vh;
  margin-bottom: auto;
}
.status {
  display: flex;
  align-items: center;
  height: 25px;
  overflow: hidden;
}
.status .combo {
  height: 28px;
  align-self: flex-start;
  border-bottom: 0;
}
.zoom {
  margin-left: 6px;
}
.zoom input {
  width: 74px;
}
.board input {
  width: 60px;
}
.step {
  display: flex;
  gap: 13px;
  padding: 0 13px 0 14px;
}
.current {
  width: 300px;
  padding-top: 2px;
  border: solid #404040;
  border-width: 0 1px;
  text-align: center;
  color: #b5b5b5;
}
.play {
  width: 28px;
}
.hscroll {
  flex: 1;
  display: flex;
  align-items: center;
  height: 25px;
  padding: 0 8px;
  background: #404040;
}
.hscroll .thumb {
  width: 37px;
  height: 22px;
  margin-left: 48%;
  margin-right: auto;
}
.corner {
  width: 26px;
}

/* right docks */
.dock .collapse {
  display: flex;
  justify-content: flex-end;
  padding: 4px 11px;
  border-bottom: 1px solid #262626;
}
.dock.main {
  width: 60px;
  border-left: 2px solid #333;
}
.dock.side {
  width: 58px;
  border-right: 2px solid #3a3a3a;
  border-left: 3px solid #353535;
}
.dock.side .collapse {
  padding-right: 7px;
}
.group {
  padding-bottom: 3px;
  border-bottom: 1px solid #2e2e2e;
}
.group::before {
  margin-bottom: 2px;
}
.group button {
  width: 100%;
  height: 43px;
}
.side .group button {
  height: 45px;
  padding-left: 2px;
}

/* windows taskbar */
.taskbar {
  display: flex;
  height: 50px;
  background: #03050b;
  color: #fff;
}
.start {
  width: 60px;
}
.find {
  width: 430px;
  padding-left: 15px;
  background: #323232;
  font-size: 17px;
}
.find::placeholder {
  color: #999;
  opacity: 1;
}
.pinned {
  display: flex;
}
.pinned button {
  position: relative;
  width: 62px;
}
.run::after {
  content: "";
  position: absolute;
  left: 6px;
  right: 5px;
  bottom: 0;
  height: 3px;
  background: #76b9ed;
}
.many::after {
  background: linear-gradient(90deg, #76b9ed 41px, #54809f 41px);
}
.active {
  background: #383b43;
}
.active::after {
  left: 0;
  right: 0;
}
.glyph {
  fill: #fff;
  font-size: 14px;
  font-weight: 700;
}
.glyph.ps { fill: #29b5dc; }
.glyph.ai { fill: #f28416; }
.tray {
  display: flex;
  align-items: center;
  gap: 10px;
  margin-left: auto;
}
.clock {
  display: flex;
  flex-direction: column;
  justify-content: center;
  align-items: center;
  width: 92px;
  padding-left: 4px;
  line-height: 20px;
}
.desktop {
  width: 6px;
  border-left: 1px solid #666;
}
```
